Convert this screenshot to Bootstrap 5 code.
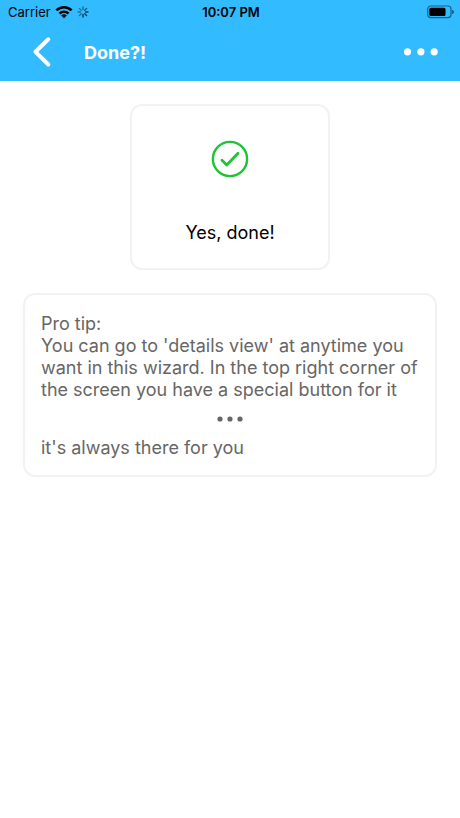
<!DOCTYPE html>
<html lang="en">
<head>
<meta charset="utf-8">
<meta name="viewport" content="width=device-width, initial-scale=1">
<title>Done?!</title>
<link href="https://cdn.jsdelivr.net/npm/bootstrap@5.3.0/dist/css/bootstrap.min.css" rel="stylesheet">
<style>
  body { font-family: Inter, "Liberation Sans", sans-serif; font-size: 18px; line-height: 22px; color: #000; background: #fff; }
  .app-head { background: #33bbff; }
  .status-bar { height: 24px; padding: 0 6px 0 8px; font-size: 13px; line-height: 24px; }
  .title-bar { height: 57px; padding: 0 16px 0 24px; }
  .title-bar h1 { font-size: 18px; line-height: 22px; margin-left: 24px; }
  .icon-btn { line-height: 0; color: #fff; }
  .panel { --bs-card-border-width: 2px; --bs-card-border-color: #f2f2f2; --bs-card-border-radius: 12px; --bs-card-inner-border-radius: 10px; }
  .page-body { padding: 23px 23px 24px; gap: 23px; }
  .done-panel { width: 200px; padding: 34px 16px 24px; gap: 44px; }
  .tip-panel { padding: 18px 16px 16px; color: #666; }
  .tip-dots { height: 36px; }
</style>
<script src="https://cdn.jsdelivr.net/npm/bootstrap@5.3.0/dist/js/bootstrap.bundle.min.js" defer></script>
</head>
<body>
<header class="app-head">
  <div class="status-bar row g-0 align-items-center">
    <div class="col d-flex align-items-center">
      <span>Carrier</span>
      <svg class="ms-1" width="18" height="14" viewBox="0 0 18 14" fill="none" stroke="#000" stroke-width="2.7" aria-hidden="true"><path d="M1.4 5.4a10.7 10.7 0 0 1 15.2 0M4.5 8.6a6.4 6.4 0 0 1 9 0"/><path d="M9 13.2 6.2 10.5a4 4 0 0 1 5.6 0Z" fill="#000" stroke="none"/></svg>
      <svg class="ms-1" width="12" height="14" viewBox="-6 -7 12 14" stroke="#063247" stroke-width="1.3" stroke-linecap="round" aria-hidden="true"><path d="M0 2.5V5" /><path d="M1.8 1.8 3.6 3.6"/><path d="M2.5 0H5" opacity=".9"/><path d="M1.8-1.8 3.6-3.6" opacity=".8"/><path d="M0-2.5V-5" opacity=".65"/><path d="M-1.8-1.8-3.6-3.6" opacity=".5"/><path d="M-2.5 0H-5" opacity=".5"/><path d="M-1.8 1.8-3.6 3.6" opacity=".6"/></svg>
    </div>
    <div class="col-auto fw-semibold">10:07 PM</div>
    <div class="col d-flex justify-content-end">
      <svg width="27" height="14" viewBox="0 0 27 14" aria-hidden="true"><rect x=".7" y="1" width="23.3" height="11.6" rx="3" fill="none" stroke="#176083" stroke-width="1.2"/><rect x="2.3" y="2.7" width="16.2" height="8.3" rx="1.5"/><path d="M25 5a2 2 0 0 1 0 4Z" fill="#176083"/></svg>
    </div>
  </div>
  <nav class="title-bar d-flex align-items-center" aria-label="Wizard">
    <button type="button" class="btn icon-btn p-0 border-0" aria-label="Back"><svg width="36" height="36" viewBox="0 0 36 36" fill="none" stroke="currentColor" stroke-width="4" stroke-linecap="round" stroke-linejoin="round" aria-hidden="true"><path d="M24.3 4.3 11.5 16.8 24.3 29.5"/></svg></button>
    <h1 class="fw-bold text-white mb-0 me-auto">Done?!</h1>
    <button type="button" class="btn icon-btn p-0 border-0" aria-label="Details view"><svg width="46" height="36" viewBox="0 0 46 36" fill="currentColor" aria-hidden="true"><circle cx="9.5" cy="16.8" r="3.6"/><circle cx="22.9" cy="16.8" r="3.6"/><circle cx="36.2" cy="16.8" r="3.6"/></svg></button>
  </nav>
</header>
<main class="page-body d-flex flex-column align-items-center">
  <button type="button" class="card panel done-panel align-items-center bg-white">
    <svg width="38" height="38" viewBox="0 0 38 38" fill="none" stroke="#1ec337" stroke-width="2.4" aria-hidden="true"><circle cx="19" cy="19" r="17.1"/><path d="M11 20.3 15.8 25 27 13.3" stroke-width="2.8" stroke-linecap="round" stroke-linejoin="round"/></svg>
    <span>Yes, done!</span>
  </button>
  <section class="card panel tip-panel w-100">
    <p class="mb-0">Pro tip:<br>You can go to 'details view' at anytime you want in this wizard. In the top right corner of the screen you have a special button for it</p>
    <div class="tip-dots d-flex align-items-center justify-content-center">
      <svg width="28" height="8" viewBox="0 0 28 8" fill="#666" role="img" aria-label="Details view button"><circle cx="4" cy="4" r="2.6"/><circle cx="14" cy="4" r="2.6"/><circle cx="24" cy="4" r="2.6"/></svg>
    </div>
    <p class="mb-0">it's always there for you</p>
  </section>
</main>
</body>
</html>
